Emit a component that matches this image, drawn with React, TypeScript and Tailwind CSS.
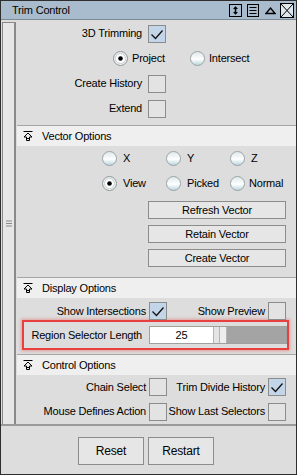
import React from 'react'

function Radio({ on }: { on?: boolean }) {
  return (
    <svg width="15" height="15" viewBox="0 0 15 15" className="shrink-0">
      <defs>
        <linearGradient id="bead" x1="0" y1="0" x2="0" y2="1">
          <stop offset="0" stopColor="#dfe7e8" />
          <stop offset="0.45" stopColor="#f7fafa" />
          <stop offset="0.55" stopColor="#ffffff" />
          <stop offset="1" stopColor="#b4d3d9" />
        </linearGradient>
      </defs>
      {on ? (
        <>
          <circle cx="7.5" cy="7.5" r="7" fill="#eef0f0" stroke="#8e9799" />
          <circle cx="7.5" cy="7.5" r="5" fill="#ffffff" stroke="#c9cfd0" />
          <circle cx="7.5" cy="7.5" r="2.3" fill="#000" />
        </>
      ) : (
        <circle cx="7.5" cy="7.5" r="7" fill="url(#bead)" stroke="#9aa3a5" />
      )}
    </svg>
  )
}

function Check({ on }: { on?: boolean }) {
  return (
    <div className={`w-[18px] h-[18px] border border-[#8c8c8c] shrink-0 ${on ? 'bg-[#c3d5e8]' : 'bg-[#e3e3e3]'}`}>
      {on && (
        <svg width="16" height="16" viewBox="0 0 16 16">
          <path d="M2.5 8.5 L6.5 12.5 L13.5 4.5" fill="none" stroke="#111" strokeWidth="1.3" />
        </svg>
      )}
    </div>
  )
}

function Header({ title }: { title: string }) {
  return (
    <div className="h-[21px] border-t border-[#a6a6a6] bg-[#efefef] flex items-center pl-[6px]">
      <svg width="10" height="10" viewBox="0 0 10 10">
        <path d="M0.5 0.5 H9.5" stroke="#000" />
        <path d="M5 2 L1 6 H3.5 V9.5 H6.5 V6 H9 Z" fill="none" stroke="#000" />
        <path d="M3.5 7.5 H6.5" stroke="#000" />
      </svg>
      <span className="ml-[9px]">{title}</span>
    </div>
  )
}

function LabelCheck({ label, on }: { label: string; on?: boolean }) {
  return (
    <div className="h-[25px] flex items-center">
      <div className="w-[131px] text-right pr-[6px] whitespace-nowrap">{label}</div>
      <Check on={on} />
    </div>
  )
}

function Pair({ a, aOn, b, bOn, h }: { a: string; aOn?: boolean; b: string; bOn?: boolean; h: string }) {
  return (
    <div className={`flex items-center pr-[10px] ${h}`}>
      <div className="w-[132px] text-right pr-[3px] whitespace-nowrap">{a}</div>
      <Check on={aOn} />
      <div className="flex-1 text-right pr-[3px] whitespace-nowrap">{b}</div>
      <Check on={bOn} />
    </div>
  )
}

function VecButton({ label }: { label: string }) {
  return (
    <button className="ml-[131px] w-[138px] h-[18px] bg-[#e6e6e6] border border-[#8c8c8c] flex items-center justify-center">
      {label}
    </button>
  )
}

export default function App() {
  return (
    <div className="w-[297px] h-[475px] border border-[#2e2e2e] bg-[#dddddd] flex flex-col font-['Liberation_Sans',Arial,sans-serif] text-[11px] tracking-[-0.2px] text-black">
      {/* title bar */}
      <div className="h-[19px] shrink-0 bg-[#a9bccd] border-b border-[#7d8b97] flex items-center pl-[11px]">
        <span className="text-[11px]">Trim Control</span>
        <div className="ml-auto flex items-center pr-[2px]">
          <svg width="13" height="13" viewBox="0 0 13 13">
            <rect x="0.5" y="0.5" width="12" height="12" fill="none" stroke="#000" />
            <path d="M6.5 3 V10" stroke="#000" strokeWidth="1.5" />
            <path d="M4 5 L6.5 2.2 L9 5 Z M4 8 L6.5 10.8 L9 8 Z" fill="#000" />
          </svg>
          <svg width="12" height="13" viewBox="0 0 12 13" className="ml-[5px]">
            <rect x="0.5" y="0.5" width="11" height="12" fill="none" stroke="#000" />
            <path d="M2.5 3.5 H9.5 M2.5 6.5 H9.5 M2.5 9.5 H9.5" stroke="#000" />
          </svg>
          <svg width="11" height="9" viewBox="0 0 11 9" className="ml-[6px]">
            <path d="M1 7.5 L5.5 2 L10 7.5 Z" fill="none" stroke="#000" strokeWidth="1.4" />
          </svg>
          <svg width="14" height="15" viewBox="0 0 14 15" className="ml-[4px]">
            <rect x="0.5" y="0.5" width="13" height="14" fill="#dfe6ec" stroke="#000" />
            <path d="M1 1 L13 14 M13 1 L1 14" stroke="#000" />
          </svg>
        </div>
      </div>

      {/* body */}
      <div className="flex flex-1 min-h-0">
        <div className="w-[16px] shrink-0 pt-[2px] pl-[1px]">
          <div className="h-full w-[14px] border-l border-t border-r-2 border-[#8a8a8a] bg-[#e6e6e6] flex items-center justify-center">
            <svg width="6" height="7" viewBox="0 0 6 7">
              <path d="M0 1 H6 M0 3.5 H6 M0 6 H6" stroke="#8a8a8a" />
            </svg>
          </div>
        </div>

        <div className="flex-1 flex flex-col">
          {/* trimming */}
          <div className="pt-[1px] pb-[4px]">
            <LabelCheck label="3D Trimming" on />
            <div className="h-[25px] flex items-center pl-[96px]">
              <div className="w-[77px] flex items-center gap-[4px]">
                <Radio on />
                <span>Project</span>
              </div>
              <div className="flex items-center gap-[4px]">
                <Radio />
                <span>Intersect</span>
              </div>
            </div>
            <LabelCheck label="Create History" />
            <LabelCheck label="Extend" />
          </div>

          <Header title="Vector Options" />
          <div className="pb-[10px]">
            <div className="h-[25px] flex items-center pl-[85px]">
              <div className="w-[64px] flex items-center gap-[6px]"><Radio /><span>X</span></div>
              <div className="w-[64px] flex items-center gap-[6px]"><Radio /><span>Y</span></div>
              <div className="flex items-center gap-[6px]"><Radio /><span>Z</span></div>
            </div>
            <div className="h-[25px] flex items-center pl-[85px]">
              <div className="w-[64px] flex items-center gap-[6px]"><Radio on /><span>View</span></div>
              <div className="w-[64px] flex items-center gap-[6px]"><Radio /><span>Picked</span></div>
              <div className="flex items-center gap-[4px]"><Radio /><span>Normal</span></div>
            </div>
            <div className="flex flex-col gap-[6px] pt-[5px]">
              <VecButton label="Refresh Vector" />
              <VecButton label="Retain Vector" />
              <VecButton label="Create Vector" />
            </div>
          </div>

          <Header title="Display Options" />
          <div className="pb-[4px]">
            <Pair a="Show Intersections" aOn b="Show Preview" h="pt-[4px] h-[22px]" />
            <div className="ml-[5px] mr-[7px] h-[30px] border-2 border-[#e8403f] shadow-[0_0_3px_1px_rgba(232,64,63,0.4)] flex items-center">
              <div className="w-[125px] text-right pr-[7px] whitespace-nowrap">Region Selector Length</div>
              <div className="flex-1 h-[18px] flex border border-[#a0a0a0]">
                <div className="w-[63px] bg-white flex items-center justify-center">25</div>
                <div className="w-[7px] bg-[#e4e4e4] border-x border-[#b4b4b4]" />
                <div className="w-[7px] bg-[#eeeeee] border-r border-[#b4b4b4]" />
                <div className="flex-1 bg-[#a4a4a4]" />
              </div>
            </div>
          </div>

          <Header title="Control Options" />
          <Pair a="Chain Select" b="Trim Divide History" bOn h="h-[24px]" />
          <Pair a="Mouse Defines Action" b="Show Last Selectors" h="h-[25px]" />
        </div>
      </div>

      {/* footer */}
      <div className="h-[50px] shrink-0 border-t-2 border-[#9a9a9a] flex justify-center gap-[4px] pt-[11px] pr-[5px]">
        <button className="w-[66px] h-[28px] bg-[#e6e6e6] border border-[#8c8c8c] text-[12px]">Reset</button>
        <button className="w-[66px] h-[28px] bg-[#e6e6e6] border border-[#8c8c8c] text-[12px]">Restart</button>
      </div>
    </div>
  )
}
